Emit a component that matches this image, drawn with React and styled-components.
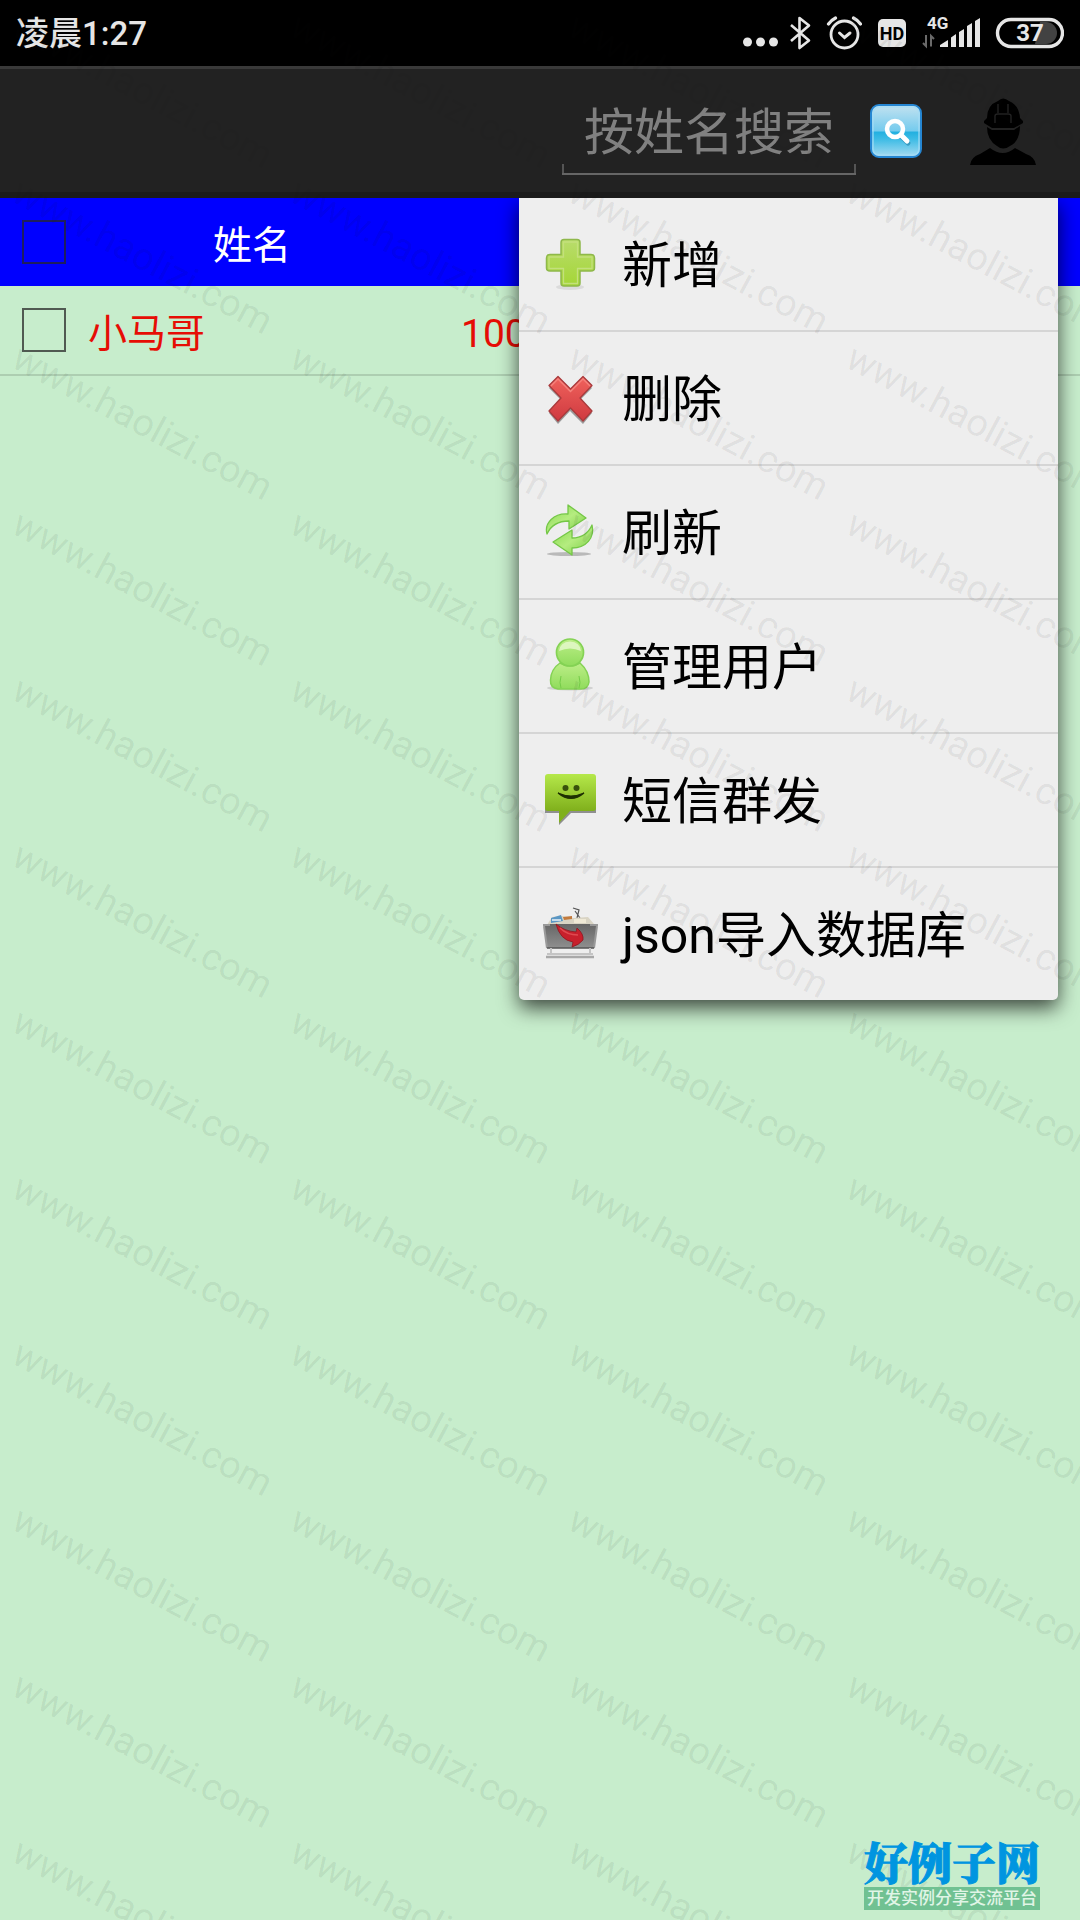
import React from 'react'
import styled, { createGlobalStyle } from 'styled-components'

const menuItems = [
    { label: '新增', Icon: AddIcon },
    { label: '删除', Icon: DeleteIcon },
    { label: '刷新', Icon: RefreshIcon },
    { label: '管理用户', Icon: UserIcon },
    { label: '短信群发', Icon: MessageIcon },
    { label: 'json导入数据库', Icon: ImportIcon },
]

const contacts = [{ name: '小马哥', phone: '100' }]

const marks = Array.from({ length: 48 }, (_, i) => i)

export default function App() {
    return (
        <Page>
            <GlobalStyle />
            <StatusBar />
            <ActionBar>
                <SearchInput type="text" placeholder="按姓名搜索" aria-label="按姓名搜索" />
                <SearchButton aria-label="搜索"><SearchIcon /></SearchButton>
                <ProfileButton aria-label="菜单"><WorkerIcon /></ProfileButton>
                <Menu>
                    {menuItems.map(({ label, Icon }) => (
                        <MenuRow key={label}>
                            <MenuButton><Icon /><MenuLabel>{label}</MenuLabel></MenuButton>
                        </MenuRow>
                    ))}
                </Menu>
            </ActionBar>
            <ContactTable>
                <thead>
                    <HeadRow>
                        <CheckHead><Checkbox type="checkbox" aria-label="全选" /></CheckHead>
                        <NameHead>姓名</NameHead>
                        <PhoneHead aria-label="电话" />
                    </HeadRow>
                </thead>
                <tbody>
                    {contacts.map(c => (
                        <ContactRow key={c.name}>
                            <CheckCell><Checkbox type="checkbox" aria-label={c.name} /></CheckCell>
                            <NameCell>{c.name}</NameCell>
                            <PhoneCell>{c.phone}</PhoneCell>
                        </ContactRow>
                    ))}
                </tbody>
            </ContactTable>
            <Watermark aria-hidden="true">
                {marks.map(i => <Mark key={i}>www.haolizi.com</Mark>)}
            </Watermark>
            <Brand>
                <BrandName>好例子网</BrandName>
                <BrandSlogan>开发实例分享交流平台</BrandSlogan>
            </Brand>
        </Page>
    )
}

function StatusBar() {
    return (
        <StatusHolder>
            <Clock>凌晨1:27</Clock>
            <svg width="35" height="34" viewBox="0 0 35 34" fill="#e6e6e6">
                <circle cx="4.5" cy="26" r="4.5" />
                <circle cx="17.5" cy="26" r="4.5" />
                <circle cx="30.5" cy="26" r="4.5" />
            </svg>
            <svg width="21" height="34" viewBox="0 0 21 34" fill="none" stroke="#e6e6e6" strokeWidth="2.6" strokeLinejoin="round">
                <path d="M1 9 L19 24.500 L9.500 32 V2 L19 9.500 L1 25" />
            </svg>
            <svg width="39" height="34" viewBox="0 0 39 34" fill="none" stroke="#e6e6e6" strokeWidth="2.800" strokeLinecap="round">
                <circle cx="21.500" cy="18.500" r="13.500" />
                <path d="M16.500 17 L21.500 21.500 L27 17" strokeWidth="3" />
                <path d="M5.500 8 Q8.500 4 12.500 2 M30.500 2 Q34.500 4 37.500 8" strokeWidth="3.200" />
            </svg>
            <svg width="32" height="34" viewBox="0 0 32 34">
                <rect x="4" y="3" width="28" height="28" rx="5" fill="#e6e6e6" />
                <text x="18" y="24" textAnchor="middle" fontSize="18" fontWeight="700" fill="#000">HD</text>
            </svg>
            <svg width="62" height="34" viewBox="0 0 62 34" fill="#e6e6e6">
                <text x="9" y="13" fontSize="17" fontWeight="700">4G</text>
                <path d="M8 19 V30 L5 27 M13 30.500 V20 L16 23" fill="none" stroke="#6a6a6a" strokeWidth="2" />
                <path d="M22 31 V29 L30 24 V31 Z M33 31 V21.500 L38 18 V31 Z M41 31 V16 L46 13 V31 Z M49 31 V10 L54 7 V31 Z M57 31 V5 L62 2 V31 Z" />
            </svg>
            <svg width="72" height="34" viewBox="0 0 72 34">
                <path d="M48 6 H54 A11 11 0 0 1 54 28 H43 Z" fill="#424242" />
                <rect x="5.500" y="3.500" width="65" height="27" rx="13.500" fill="none" stroke="#e6e6e6" strokeWidth="3.400" />
                <text x="38" y="25" textAnchor="middle" fontSize="24" fontWeight="700" fill="#e6e6e6">37</text>
            </svg>
        </StatusHolder>
    )
}

function SearchIcon() {
    return (
        <svg width="52" height="54" viewBox="0 0 52 54">
            <defs>
                <linearGradient id="glass" x1="0" y1="0" x2="0" y2="1">
                    <stop offset="0" stopColor="#c3e2f0" />
                    <stop offset="0.5" stopColor="#74cbee" />
                    <stop offset="0.52" stopColor="#22b0e0" />
                    <stop offset="0.65" stopColor="#3bbbe5" />
                    <stop offset="1" stopColor="#a9dcf2" />
                </linearGradient>
            </defs>
            <rect x="1" y="1" width="50" height="52" rx="8" fill="url(#glass)" stroke="#2586d2" strokeWidth="2" />
            <rect x="3" y="3" width="46" height="48" rx="6" fill="none" stroke="#a5dcf5" strokeWidth="1.500" opacity="0.8" />
            <g fill="none" strokeLinecap="round">
                <path d="M31 32 L38 39" stroke="#2080a8" strokeWidth="5" opacity="0.6" />
                <circle cx="25" cy="25" r="8" stroke="#fff" strokeWidth="4.500" />
                <path d="M31 31 L37 37" stroke="#fff" strokeWidth="5" />
            </g>
        </svg>
    )
}

function WorkerIcon() {
    return (
        <svg width="66" height="67" viewBox="0 0 66 67">
            <path d="M0 67 Q1 59 10 56 L20 50 Q33 60 45 50 L56 56 Q65 59 66 67 Z" />
            <path d="M17 29 L22 32 H44 L50 28 Q50 43 40 48 Q33 53 27 48 Q17 42 17 29 Z" />
            <path d="M14 23 L17 20 Q17 7 28 3 Q33 -2 39 3 Q49 7 50 20 L53 23 V25 L44 30 H22 L14 25 Z" />
            <path d="M28 6 V15 M38 6 V15 M25 25 V18 Q25 16 28 16 H38 Q41 16 41 18 V25" fill="none" stroke="#222" strokeWidth="1.400" />
        </svg>
    )
}

function AddIcon() {
    return (
        <svg width="56" height="56" viewBox="0 0 56 56">
            <defs>
                <linearGradient id="add" x1="0" y1="0" x2="0" y2="1">
                    <stop offset="0" stopColor="#b9dc6c" />
                    <stop offset="1" stopColor="#a4d636" />
                </linearGradient>
            </defs>
            <ellipse cx="28" cy="51" rx="14" ry="3" fill="#000" opacity="0.08" />
            <path d="M22 3.500 H35 Q38 3.500 38 6.500 V18.500 H49 Q52.500 18.500 52.500 22 V32 Q52.500 35 49 35 H38 V47 Q38 50 35 50 H22 Q19 50 19 47 V35 H8 Q4.500 35 4.500 32 V22 Q4.500 18.500 8 18.500 H19 V6.500 Q19 3.500 22 3.500 Z" fill="url(#add)" stroke="#8fb84b" strokeWidth="1.500" />
            <path d="M21.500 6 H35.500 V21 H50 V32.500 H35.500 V47.500 H21.500 V32.500 H7 V21 H21.500 Z" fill="none" stroke="#c3e07c" strokeWidth="1.300" />
        </svg>
    )
}

function DeleteIcon() {
    return (
        <svg width="56" height="56" viewBox="0 0 56 56">
            <defs>
                <linearGradient id="del" x1="0" y1="0" x2="0" y2="1">
                    <stop offset="0" stopColor="#f0625c" />
                    <stop offset="1" stopColor="#cf3a40" />
                </linearGradient>
            </defs>
            <path d="M15 9 L28 22 L41 9 L50 18 L38 30 L50 43 L41 54 L28 41 L16 54 L7 43 L19 30 L7 18 Z" fill="#000" opacity="0.35" />
            <path d="M16 6.500 L28.500 19 L41 6.500 L50 15.500 L38 28 L50 41 L41 51 L28.500 38 L16 51 L7 41 L19 28 L7 15.500 Z" fill="url(#del)" stroke="#a93a3c" strokeWidth="1.300" strokeLinejoin="round" />
            <path d="M9 16 L16 9 L28.500 21.500 L41 9 L48 16" fill="none" stroke="#f5827c" strokeWidth="1.300" />
        </svg>
    )
}

function RefreshIcon() {
    return (
        <svg width="56" height="56" viewBox="0 0 56 56">
            <defs>
                <linearGradient id="ref" x1="0" y1="0" x2="1" y2="1">
                    <stop offset="0" stopColor="#84d94c" />
                    <stop offset="0.5" stopColor="#b5ec80" />
                    <stop offset="1" stopColor="#76cc40" />
                </linearGradient>
            </defs>
            <ellipse cx="27" cy="50" rx="22" ry="2" fill="#000" opacity="0.22" />
            <g fill="url(#ref)" stroke="#74c746" strokeWidth="1.300" strokeLinejoin="round">
                <path d="M5 30 C2 19 12 9 26 10 V1 L44 14 L27 25 V17 C17 17 9 21 5 30 Z" />
                <path d="M50 21 C53 34 44 44 30 44 V51 L11 38 L30 26 V34 C40 34 46 30 50 21 Z" />
            </g>
        </svg>
    )
}

function UserIcon() {
    return (
        <svg width="56" height="56" viewBox="0 0 56 56">
            <defs>
                <linearGradient id="usr" x1="0" y1="0" x2="0" y2="1">
                    <stop offset="0" stopColor="#bdee88" />
                    <stop offset="1" stopColor="#90dc5c" />
                </linearGradient>
            </defs>
            <ellipse cx="28" cy="50" rx="23" ry="2.500" fill="#000" opacity="0.12" />
            <path d="M18 25 Q28 31 38 25 Q47 33 47 44 Q46 51 39 51 H16 Q8 50 8.500 42 Q9 31 18 25 Z" fill="url(#usr)" stroke="#84d254" strokeWidth="1.500" />
            <path d="M19 38 Q17 45 19 50 M37 38 Q39 45 37 50" fill="none" stroke="#75cc48" strokeWidth="1" />
            <circle cx="28" cy="14.500" r="13.500" fill="url(#usr)" stroke="#84d254" strokeWidth="1.700" />
            <path d="M17 13 Q18 4 28 3.500 Q38 4 39 13 Q28 8 17 13 Z" fill="#e7f9cf" opacity="0.8" />
        </svg>
    )
}

function MessageIcon() {
    return (
        <svg width="56" height="56" viewBox="0 0 56 56">
            <defs>
                <linearGradient id="msg" x1="0" y1="0" x2="0" y2="1">
                    <stop offset="0" stopColor="#b5e84a" />
                    <stop offset="0.75" stopColor="#80b01c" />
                    <stop offset="1" stopColor="#80b01c" />
                </linearGradient>
            </defs>
            <path d="M5 4 H52 Q54 4 54 6 V41 H29 L17 53 V41 H3 V6 Z" fill="#000" opacity="0.4" />
            <path d="M6 2 H51 Q54 2 54 5 V36 Q54 39 51 39 H28 L17 51 V39 H6 Q3 39 3 36 V5 Q3 2 6 2 Z" fill="url(#msg)" />
            <circle cx="23.500" cy="16" r="3" fill="#38500c" />
            <circle cx="34.500" cy="16" r="3" fill="#38500c" />
            <path d="M16 21 Q29 32 42 21 Q29 27 16 21 Z" fill="#1f3003" stroke="#1f3003" strokeWidth="1.200" />
        </svg>
    )
}

function ImportIcon() {
    return (
        <svg width="56" height="56" viewBox="0 0 56 56">
            <defs>
                <linearGradient id="imp" x1="0" y1="0" x2="0" y2="1">
                    <stop offset="0" stopColor="#666" />
                    <stop offset="1" stopColor="#8f8f8f" />
                </linearGradient>
            </defs>
            <path d="M31 2 L37 4 L35 12 M33 5 L38 12" fill="none" stroke="#555" strokeWidth="1.200" />
            <path d="M5 19 L10 11 L20 10 L32 12 L46 11 L52 18 Z" fill="#d9d4c4" />
            <path d="M9 12 L19 9 L21 15 L9 17 Z" fill="#5b97c4" />
            <path d="M10 14 H19" stroke="#e8f1f7" strokeWidth="1.500" />
            <path d="M21 11 L30 10 V13 L22 14 Z" fill="#c27a3d" />
            <path d="M32 13 H44 V17 H32 Z" fill="#efe9d6" />
            <path d="M2 18 H55 L52 42 H5 Z" fill="url(#imp)" />
            <path d="M1 19 H8 M48 19 H56 M2 20 L5 42 M55 20 L52 42" fill="none" stroke="#999" strokeWidth="2" />
            <path d="M5 42 H52" stroke="#555" strokeWidth="1.500" />
            <path d="M9 42 V48 M48 42 V48 M5 48 H51" fill="none" stroke="#c4c4c4" strokeWidth="2" />
            <path d="M4 51 H52" stroke="#a8a8a8" strokeWidth="2.500" />
            <path d="M14 18 Q22 25 34 26 L35 22 Q42 28 41 34 Q37 39 30 41 L31 36 Q18 34 14 18 Z" fill="#c8202c" stroke="#8f1620" strokeWidth="0.800" />
            <path d="M18 22 Q25 29 36 29" fill="none" stroke="#e04a50" strokeWidth="1.500" />
        </svg>
    )
}

const GlobalStyle = createGlobalStyle`
    * {
        box-sizing: border-box;
    }
    body {
        margin: 0;
        background: #c7edcc;
        font-family: Roboto, "Noto Sans CJK SC", sans-serif;
    }
    button, input {
        font-family: inherit;
    }
    button {
        border: 0;
        padding: 0;
        background: transparent;
    }
    svg {
        display: block;
        flex: none;
    }
`
const Page = styled.div`
    position: relative;
    min-height: 100vh;
    overflow: hidden;
`
const StatusHolder = styled.div`
    display: flex;
    align-items: center;
    gap: 12px;
    height: 66px;
    padding: 0 16px;
    background: #000;
`
const Clock = styled.span`
    margin-right: auto;
    padding-top: 2px;
    color: #e6e6e6;
    font-size: 33px;
    font-weight: 500;
    line-height: 40px;
`
const ActionBar = styled.header`
    position: relative;
    z-index: 1;
    display: flex;
    align-items: center;
    justify-content: flex-end;
    height: 132px;
    padding: 0 44px 2px 0;
    background: #222;
    box-shadow: inset 0 3px #393939, inset 0 -6px #1b1b1b;
`
const SearchInput = styled.input`
    width: 294px;
    height: 88px;
    margin-right: 14px;
    padding: 4px 22px 0;
    border: 0;
    border-radius: 0;
    outline: 0;
    color: #fff;
    font-size: 50px;
    background:
        linear-gradient(#666, #666) bottom / 100% 2px no-repeat,
        linear-gradient(#555, #555) left bottom / 2px 11px no-repeat,
        linear-gradient(#555, #555) right bottom / 2px 11px no-repeat;

    &::placeholder {
        color: #808080;
        opacity: 1;
    }
`
const SearchButton = styled.button`
    margin-right: 48px;
`
const ProfileButton = styled.button`
    color: #000;
`
const Menu = styled.ul`
    position: absolute;
    top: 100%;
    right: 22px;
    width: 539px;
    margin: 0;
    padding: 0;
    list-style: none;
    background: #eee;
    border-radius: 0 0 5px 5px;
    box-shadow: 0 8px 20px rgba(0, 0, 0, 0.7);
    clip-path: inset(0 -40px -40px -40px);
`
const MenuRow = styled.li`
    border-bottom: 2px solid #d5d5d5;

    &:last-child {
        border-bottom: 0;
    }
`
const MenuButton = styled.button`
    display: flex;
    align-items: center;
    gap: 24px;
    width: 100%;
    height: 132px;
    padding: 0 23px;
    color: #000;
    font-size: 50px;
    text-align: left;
`
const MenuLabel = styled.span`
    padding-bottom: 7px;
`
const ContactTable = styled.table`
    width: 100%;
    table-layout: fixed;
    border-collapse: collapse;
    font-size: 39px;

    td, th {
        height: 88px;
        padding: 0;
        font-weight: 400;
        line-height: 44px;
    }
`
const HeadRow = styled.tr`
    background: #00f;
    color: #fff;
`
const ContactRow = styled.tr`
    color: #e60d05;
    box-shadow: 0 2px rgba(0, 0, 0, 0.13);
`
const CheckHead = styled.th`
    width: 88px;
`
const NameHead = styled.th`
    width: 328px;
    text-align: center;

    && {
        padding-top: 8px;
    }
`
const PhoneHead = styled.th`
    text-align: left;
`
const CheckCell = styled.td`
    text-align: center;
`
const NameCell = styled.td`
    && {
        padding-top: 8px;
    }
`
const PhoneCell = styled.td`
    && {
        padding: 8px 0 0 45px;
    }
`
const Checkbox = styled.input`
    display: block;
    appearance: none;
    width: 44px;
    height: 44px;
    margin: 0 auto;
    border: 2px solid rgba(40, 40, 40, 0.75);
`
const Watermark = styled.div`
    position: absolute;
    inset: 0;
    z-index: 2;
    display: grid;
    grid-template-columns: repeat(4, 278px);
    grid-auto-rows: 166px;
    padding: 1px 0 0 10px;
    overflow: hidden;
    pointer-events: none;
`
const Mark = styled.span`
    color: rgba(20, 20, 20, 0.08);
    font-size: 38px;
    line-height: 40px;
    white-space: nowrap;
    transform: rotate(28deg);
    transform-origin: 0 32px;
`
const Brand = styled.div`
    position: absolute;
    right: 40px;
    bottom: 10px;
    z-index: 3;
    width: 176px;
    text-align: center;
`
const BrandName = styled.div`
    padding-bottom: 2px;
    color: #0095e0;
    font-family: "Noto Serif CJK SC", "Noto Sans CJK SC", serif;
    font-size: 44px;
    font-weight: 900;
    line-height: 48px;
    white-space: nowrap;
    -webkit-text-stroke: 1px #0095e0;
`
const BrandSlogan = styled.div`
    background: #70c192;
    color: #e0f5e6;
    font-size: 17px;
    font-weight: 500;
    line-height: 23px;
    white-space: nowrap;
`
